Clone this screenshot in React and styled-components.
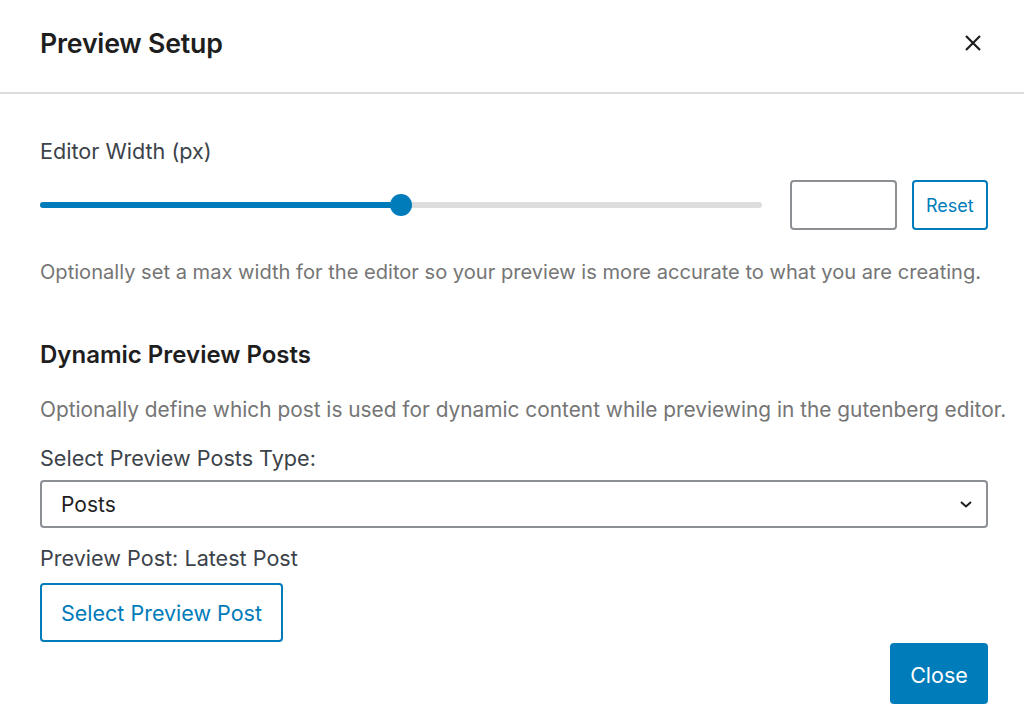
import React from 'react';
import styled, { createGlobalStyle } from 'styled-components';

const GlobalStyle = createGlobalStyle`
    html, body {
        margin: 0;
        padding: 0;
        background: #fff;
        font-family: Inter, "Noto Sans", sans-serif;
    }
`

const Modal = styled.div`
    width: 1024px;
    height: 727px;
    box-sizing: border-box;
    background: #fff;
    display: flex;
    flex-direction: column;
`

const Header = styled.div`
    height: 94px;
    box-sizing: border-box;
    border-bottom: 2px solid #dcdcde;
    display: flex;
    align-items: center;
    justify-content: space-between;
    padding: 0 39px 6px 40px;
`

const Title = styled.h1`
    margin: 0;
    font-size: 26.7px;
    font-weight: 600;
    color: #1e1e1e;
    letter-spacing: -0.2px;
`

const CloseIcon = styled.button`
    border: 0;
    background: none;
    padding: 0;
    width: 24px;
    height: 24px;
    display: flex;
    align-items: center;
    justify-content: center;
    color: #1e1e1e;
`

const Body = styled.div`
    flex: 1;
    padding: 43px 36px 0 40px;
    display: flex;
    flex-direction: column;
`

const Label = styled.div`
    margin-top: ${p => p.$mt || 0}px;
    font-size: 21.6px;
    color: #3c434a;
    line-height: 28px;
`

const RangeRow = styled.div`
    display: flex;
    align-items: center;
    margin-top: 15px;
    height: 50px;
`

const Track = styled.div`
    position: relative;
    width: 722px;
    height: 6px;
    border-radius: 3px;
    background: #dddddd;
`

const Fill = styled.div`
    height: 100%;
    border-radius: 3px;
    background: #007cba;
`

const Thumb = styled.div`
    position: absolute;
    top: 50%;
    width: 22px;
    height: 22px;
    border-radius: 50%;
    background: #007cba;
    transform: translate(-50%, -50%);
`

const NumberBox = styled.div`
    margin-left: 28px;
    width: 107px;
    height: 50px;
    box-sizing: border-box;
    border: 2px solid #8c8f94;
    border-radius: 4px;
`

const OutlineButton = styled.button`
    box-sizing: border-box;
    border: 2px solid #007cba;
    border-radius: 4px;
    background: #fff;
    color: #007cba;
    font-family: inherit;
    font-size: ${p => p.$size || 18}px;
    height: ${p => p.$h || 50}px;
    padding: 0 ${p => p.$px || 12}px;
    margin-left: ${p => p.$ml || 0}px;
    cursor: pointer;
`

const Help = styled.p`
    margin: ${p => p.$mt || 0}px 0 0;
    font-size: ${p => p.$size || 20}px;
    color: #757575;
    line-height: 28px;
    white-space: nowrap;
`

const Heading = styled.h2`
    margin: 54px 0 0;
    font-size: 24px;
    font-weight: 600;
    color: #1e1e1e;
    line-height: 30px;
`

const Select = styled.div`
    margin-top: 8px;
    height: 48px;
    box-sizing: border-box;
    border: 2px solid #8c8f94;
    border-radius: 4px;
    display: flex;
    align-items: center;
    justify-content: space-between;
    padding: 0 12px 0 19px;
    font-size: 21px;
    color: #1e1e1e;
`

const ButtonRow = styled.div`
    margin-top: 11px;
`

const Footer = styled.div`
    display: flex;
    justify-content: flex-end;
    margin-top: 1px;
`

const PrimaryButton = styled.button`
    width: 98px;
    height: 61px;
    padding: 2px 0 0;
    border: 0;
    border-radius: 4px;
    background: #007cba;
    color: #fff;
    font-family: inherit;
    font-size: 21.5px;
    cursor: pointer;
`

export default function App() {
    const value = 50
    return (
        <Modal>
            <GlobalStyle />
            <Header>
                <Title>Preview Setup</Title>
                <CloseIcon aria-label="Close">
                    <svg width="18" height="18" viewBox="0 0 18 18">
                        <path d="M2 2 L16 16 M16 2 L2 16" stroke="#1e1e1e" strokeWidth="2.2" />
                    </svg>
                </CloseIcon>
            </Header>
            <Body>
                <Label>Editor Width (px)</Label>
                <RangeRow>
                    <Track>
                        <Fill style={{ width: `${value}%` }} />
                        <Thumb style={{ left: `${value}%` }} />
                    </Track>
                    <NumberBox />
                    <OutlineButton $ml={15} $px={12}>Reset</OutlineButton>
                </RangeRow>
                <Help $mt={28} $size={20.1}>Optionally set a max width for the editor so your preview is more accurate to what you are creating.</Help>
                <Heading>Dynamic Preview Posts</Heading>
                <Help $mt={26} $size={20.85}>Optionally define which post is used for dynamic content while previewing in the gutenberg editor.</Help>
                <Label $mt={20}>Select Preview Posts Type:</Label>
                <Select>
                    <span>Posts</span>
                    <svg width="16" height="16" viewBox="0 0 16 16">
                        <path d="M3 6 L8 10.5 L13 6" fill="none" stroke="#1e1e1e" strokeWidth="2" />
                    </svg>
                </Select>
                <Label $mt={16}>Preview Post: Latest Post</Label>
                <ButtonRow>
                    <OutlineButton $h={59} $px={19} $size={21.5}>Select Preview Post</OutlineButton>
                </ButtonRow>
                <Footer>
                    <PrimaryButton>Close</PrimaryButton>
                </Footer>
            </Body>
        </Modal>
    )
}
